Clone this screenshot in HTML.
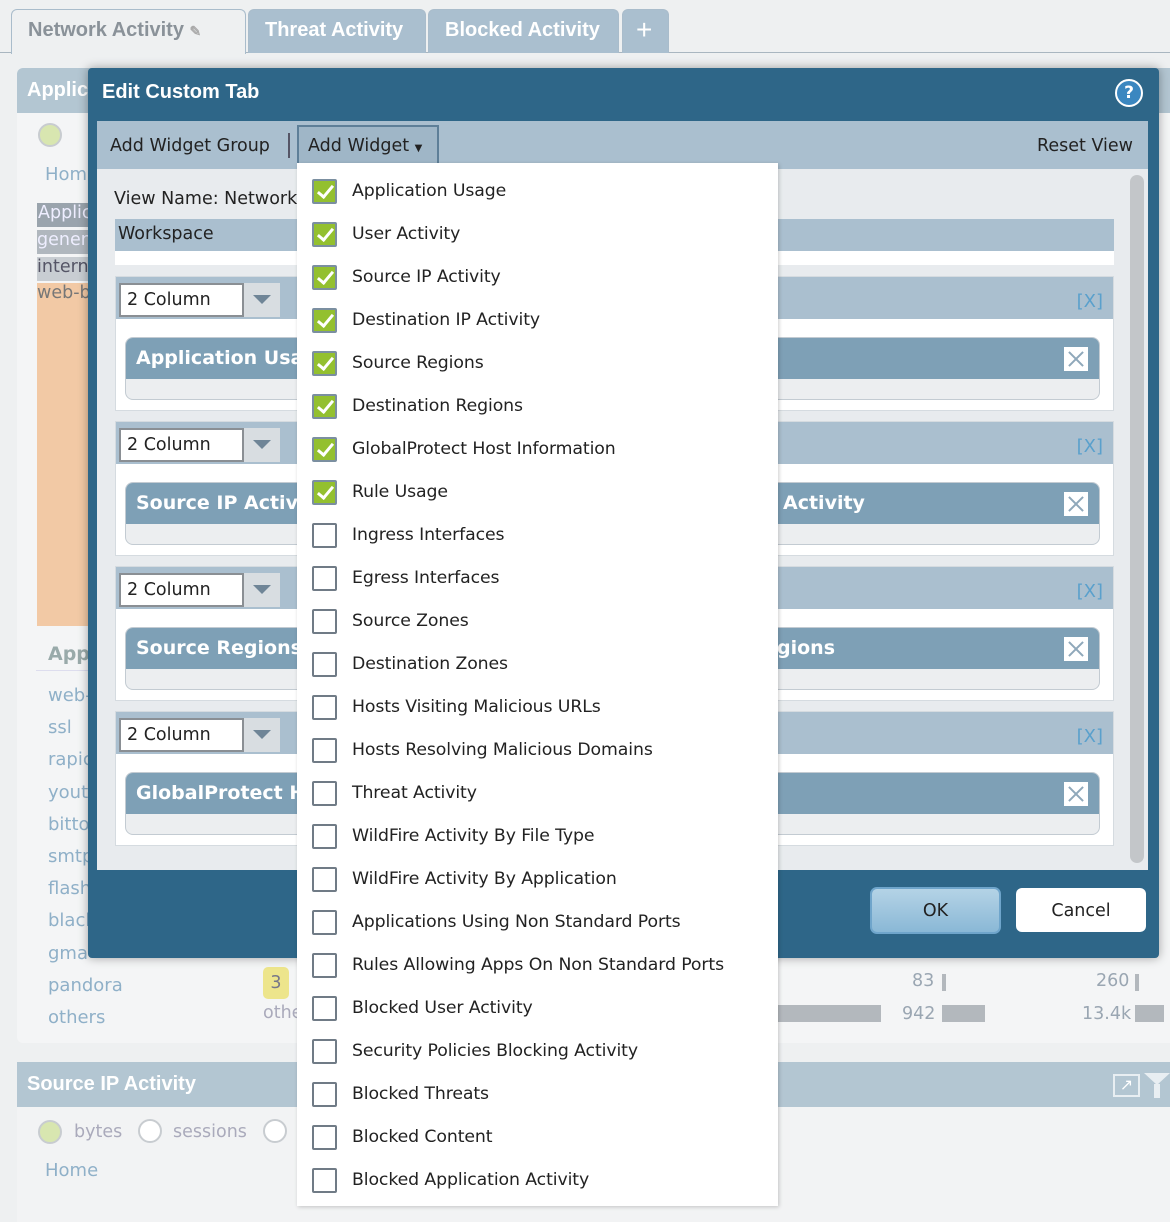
<!DOCTYPE html><html><head><style>
*{box-sizing:border-box;margin:0;padding:0}
body{width:1170px;height:1213px;overflow:hidden;background:#eef0f1;font-family:"DejaVu Sans","Liberation Sans",sans-serif;position:relative;font-size:17.5px;color:#222}
.a{position:absolute}
.tab{position:absolute;top:9px;height:44px;border:1px solid #a9bccb;border-bottom:none;border-radius:6px 6px 0 0;background:#aabfcf;color:#fff;font-weight:bold;font-size:20px;line-height:40px;padding-left:16px;font-family:"Liberation Sans",sans-serif}
.cb{position:absolute;left:312px;width:25px;height:25px;border:2px solid #707b86;background:#fff;border-radius:2px}
.cb.on{background:#93c02f;border-color:#7b8fa0}
.cb.on:after{content:"";position:absolute;left:7px;top:1px;width:6px;height:13px;border:solid #fff;border-width:0 3px 3px 0;transform:rotate(40deg)}
.it{position:absolute;left:352px;font-size:17.3px;color:#222;letter-spacing:-0.1px}
.grp{position:absolute;left:115px;width:999px;height:135px;background:#fff;border:1px solid #d5dbe0}
.gh{position:absolute;left:0;top:0;right:0;height:42px;background:#aabfcf}
.sel{position:absolute;left:3px;top:6px;width:125px;height:34px;background:#fff;border:2px solid #8a8f94;font-size:17.5px;line-height:30px;padding-left:6px}
.arr{position:absolute;left:128px;top:6px;width:36px;height:34px;background:#d8dde1}
.arr:after{content:"";position:absolute;left:9px;top:12px;border:9px solid transparent;border-top:9px solid #6f8597;border-bottom:0}
.xx{position:absolute;right:10px;top:14px;color:#5aa0cc;font-size:18px}
.wd{position:absolute;left:9px;top:60px;width:975px;height:63px;border:1px solid #c3cbd2;border-radius:8px;background:#eceef0;overflow:hidden}
.wh{height:41px;background:#7ea0b6;color:#fff;font-weight:bold;font-size:19px;line-height:41px;padding-left:10px}
.wx{position:absolute;right:11px;top:9px;width:24px;height:24px;background:#fff}
.wx:before,.wx:after{content:"";position:absolute;left:11px;top:2px;width:2px;height:20px;background:#8fa8ba;transform:rotate(45deg)}
.wx:after{transform:rotate(-45deg)}
.bg{color:#8fb0c8;font-size:18px}
</style></head><body>
<div class="a" style="left:0;top:52px;width:1170px;height:1px;background:#a9b6c0"></div>
<div class="tab" style="left:11px;width:235px;background:#eef0f1;color:#8a9299;height:45px">Network Activity <span style="font-size:14px;color:#aaa">✎</span></div>
<div class="tab" style="left:248px;width:178px">Threat Activity</div>
<div class="tab" style="left:428px;width:191px">Blocked Activity</div>
<div class="tab" style="left:622px;width:47px;font-size:28px;font-weight:normal;padding-left:13px">+</div>

<div class="a" style="left:17px;top:68px;width:1160px;height:975px;background:#f4f5f6;border-radius:6px"></div>
<div class="a" style="left:17px;top:68px;width:1160px;height:45px;background:#b3c6d2;border-radius:6px 6px 0 0;color:#fff;font-weight:bold;font-size:20px;line-height:44px;padding-left:10px;font-family:'Liberation Sans'">Applic</div>
<div class="a" style="left:38px;top:123px;width:24px;height:24px;border-radius:50%;background:#d8e6b0;border:2px solid #c8ccd0"></div>
<div class="a bg" style="left:45px;top:164px">Home</div>
<div class="a" style="left:37px;top:203px;width:60px;height:24px;background:#9aa4ad;color:#eef;padding-left:1px">Applic</div>
<div class="a" style="left:37px;top:230px;width:60px;height:24px;background:#b0b7be;color:#eef">gener</div>
<div class="a" style="left:37px;top:257px;width:60px;height:24px;background:#c8cdd2;color:#556">intern</div>
<div class="a" style="left:37px;top:283px;width:60px;height:343px;background:#f2c9a5;color:#777">web-b</div>
<div class="a" style="left:48px;top:643px;color:#9aa;font-weight:bold;font-size:19px">App</div>
<div class="a" style="left:36px;top:670px;width:60px;height:1px;background:#dde"></div>
<div class="a bg" style="left:48px;top:680px;line-height:32.2px">web-<br>ssl<br>rapic<br>yout<br>bitto<br>smtp<br>flash<br>black<br>gma<br>pandora<br>others</div>
<div class="a" style="left:263px;top:967px;width:26px;height:32px;background:#ede58c;border-radius:5px;text-align:center;line-height:32px;color:#778">3</div>
<div class="a" style="left:263px;top:1003px;color:#aab">othe</div>
<div class="a" style="left:778px;top:1005px;width:103px;height:17px;background:#b3b8bd"></div>
<div class="a" style="left:912px;top:971px;color:#9aa6b2">83</div>
<div class="a" style="left:942px;top:974px;width:4px;height:17px;background:#b3b8bd"></div>
<div class="a" style="left:902px;top:1004px;color:#9aa6b2">942</div>
<div class="a" style="left:942px;top:1005px;width:43px;height:17px;background:#b3b8bd"></div>
<div class="a" style="left:1096px;top:971px;color:#9aa6b2">260</div>
<div class="a" style="left:1135px;top:974px;width:4px;height:17px;background:#b3b8bd"></div>
<div class="a" style="left:1082px;top:1004px;color:#9aa6b2">13.4k</div>
<div class="a" style="left:1135px;top:1005px;width:29px;height:17px;background:#b3b8bd"></div>

<div class="a" style="left:17px;top:1062px;width:1160px;height:160px;background:#f2f3f4"></div>
<div class="a" style="left:17px;top:1062px;width:1160px;height:45px;background:#b3c6d2;color:#fff;font-weight:bold;font-size:20px;line-height:45px;padding-left:10px;font-family:'Liberation Sans'">Source IP Activity</div>
<div class="a" style="left:1113px;top:1074px;width:27px;height:23px;border:2px solid #e8eef2;color:#fff;font-size:16px;text-align:center;line-height:18px">↗</div>
<div class="a" style="left:1144px;top:1073px;border:13px solid transparent;border-top:12px solid #e8eef2;border-bottom:0"></div>
<div class="a" style="left:1154px;top:1084px;width:6px;height:14px;background:#e8eef2"></div>
<div class="a" style="left:38px;top:1120px;width:24px;height:24px;border-radius:50%;background:#d8e6b0;border:2px solid #c8ccd0"></div>
<div class="a" style="left:74px;top:1122px;color:#aab">bytes</div>
<div class="a" style="left:138px;top:1119px;width:24px;height:24px;border-radius:50%;background:#fff;border:2px solid #c8ccd0"></div>
<div class="a" style="left:173px;top:1122px;color:#aab">sessions</div>
<div class="a" style="left:263px;top:1119px;width:24px;height:24px;border-radius:50%;background:#fff;border:2px solid #c8ccd0"></div>
<div class="a bg" style="left:45px;top:1160px">Home</div>

<div class="a" style="left:88px;top:68px;width:1071px;height:890px;background:#2e6688;border-radius:4px;box-shadow:0 0 10px rgba(0,0,0,.35)"></div>
<div class="a" style="left:102px;top:81px;color:#fff;font-weight:bold;font-size:20px;font-family:'Liberation Sans'">Edit Custom Tab</div>
<div class="a" style="left:1115px;top:79px;width:28px;height:28px;border-radius:50%;background:#3b87c0;border:2px solid #fff;color:#fff;font-weight:bold;font-size:17px;text-align:center;line-height:24px">?</div>
<div class="a" style="left:97px;top:121px;width:1051px;height:48px;background:#aabfcf"></div>
<div class="a" style="left:110px;top:136px">Add Widget Group</div>
<div class="a" style="left:288px;top:133px;width:2px;height:25px;background:#556"></div>
<div class="a" style="left:297px;top:125px;width:142px;height:40px;border:2px solid #5e7f98;background:#9fb6c7;padding:9px 0 0 9px">Add Widget <span style="font-size:10px">▼</span></div>
<div class="a" style="left:1037px;top:136px">Reset View</div>
<div class="a" style="left:97px;top:169px;width:1051px;height:701px;background:#e8ebee"></div>
<div class="a" style="left:1130px;top:175px;width:14px;height:688px;background:#c3c6c9;border-radius:7px"></div>
<div class="a" style="left:114px;top:189px">View Name: Network</div>
<div class="a" style="left:115px;top:219px;width:999px;height:46px;background:#fff"></div>
<div class="a" style="left:115px;top:219px;width:999px;height:32px;background:#aabfcf;padding:5px 3px">Workspace</div>

<div class="grp" style="top:276px"><div class="gh"><div class="sel">2 Column</div><div class="arr"></div><div class="xx">[X]</div></div><div class="wd"><div class="wh">Application Usage</div><div class="wx"></div></div></div>
<div class="grp" style="top:421px"><div class="gh"><div class="sel">2 Column</div><div class="arr"></div><div class="xx">[X]</div></div><div class="wd"><div class="wh">Source IP Activity<span style="position:absolute;left:657px">Activity</span></div><div class="wx"></div></div></div>
<div class="grp" style="top:566px"><div class="gh"><div class="sel">2 Column</div><div class="arr"></div><div class="xx">[X]</div></div><div class="wd"><div class="wh">Source Regions<span style="position:absolute;left:651px">gions</span></div><div class="wx"></div></div></div>
<div class="grp" style="top:711px"><div class="gh"><div class="sel">2 Column</div><div class="arr"></div><div class="xx">[X]</div></div><div class="wd"><div class="wh">GlobalProtect Host</div><div class="wx"></div></div></div>

<div class="a" style="left:870px;top:887px;width:131px;height:47px;border-radius:7px;background:linear-gradient(#b4d3e6,#8ab8d6);border:2px solid #6fa5cb;text-align:center;line-height:45px">OK</div>
<div class="a" style="left:1016px;top:888px;width:130px;height:44px;border-radius:6px;background:#fff;text-align:center;line-height:46px">Cancel</div>

<div class="a" style="left:297px;top:163px;width:481px;height:1043px;background:#fff;box-shadow:1px 1px 4px rgba(0,0,0,.2)"></div>
<div class="cb on" style="top:179px"></div><div class="it" style="top:181px">Application Usage</div>
<div class="cb on" style="top:222px"></div><div class="it" style="top:224px">User Activity</div>
<div class="cb on" style="top:265px"></div><div class="it" style="top:267px">Source IP Activity</div>
<div class="cb on" style="top:308px"></div><div class="it" style="top:310px">Destination IP Activity</div>
<div class="cb on" style="top:351px"></div><div class="it" style="top:353px">Source Regions</div>
<div class="cb on" style="top:394px"></div><div class="it" style="top:396px">Destination Regions</div>
<div class="cb on" style="top:437px"></div><div class="it" style="top:439px">GlobalProtect Host Information</div>
<div class="cb on" style="top:480px"></div><div class="it" style="top:482px">Rule Usage</div>
<div class="cb" style="top:523px"></div><div class="it" style="top:525px">Ingress Interfaces</div>
<div class="cb" style="top:566px"></div><div class="it" style="top:568px">Egress Interfaces</div>
<div class="cb" style="top:609px"></div><div class="it" style="top:611px">Source Zones</div>
<div class="cb" style="top:652px"></div><div class="it" style="top:654px">Destination Zones</div>
<div class="cb" style="top:695px"></div><div class="it" style="top:697px">Hosts Visiting Malicious URLs</div>
<div class="cb" style="top:738px"></div><div class="it" style="top:740px">Hosts Resolving Malicious Domains</div>
<div class="cb" style="top:781px"></div><div class="it" style="top:783px">Threat Activity</div>
<div class="cb" style="top:824px"></div><div class="it" style="top:826px">WildFire Activity By File Type</div>
<div class="cb" style="top:867px"></div><div class="it" style="top:869px">WildFire Activity By Application</div>
<div class="cb" style="top:910px"></div><div class="it" style="top:912px">Applications Using Non Standard Ports</div>
<div class="cb" style="top:953px"></div><div class="it" style="top:955px">Rules Allowing Apps On Non Standard Ports</div>
<div class="cb" style="top:996px"></div><div class="it" style="top:998px">Blocked User Activity</div>
<div class="cb" style="top:1039px"></div><div class="it" style="top:1041px">Security Policies Blocking Activity</div>
<div class="cb" style="top:1082px"></div><div class="it" style="top:1084px">Blocked Threats</div>
<div class="cb" style="top:1125px"></div><div class="it" style="top:1127px">Blocked Content</div>
<div class="cb" style="top:1168px"></div><div class="it" style="top:1170px">Blocked Application Activity</div>
</body></html>
